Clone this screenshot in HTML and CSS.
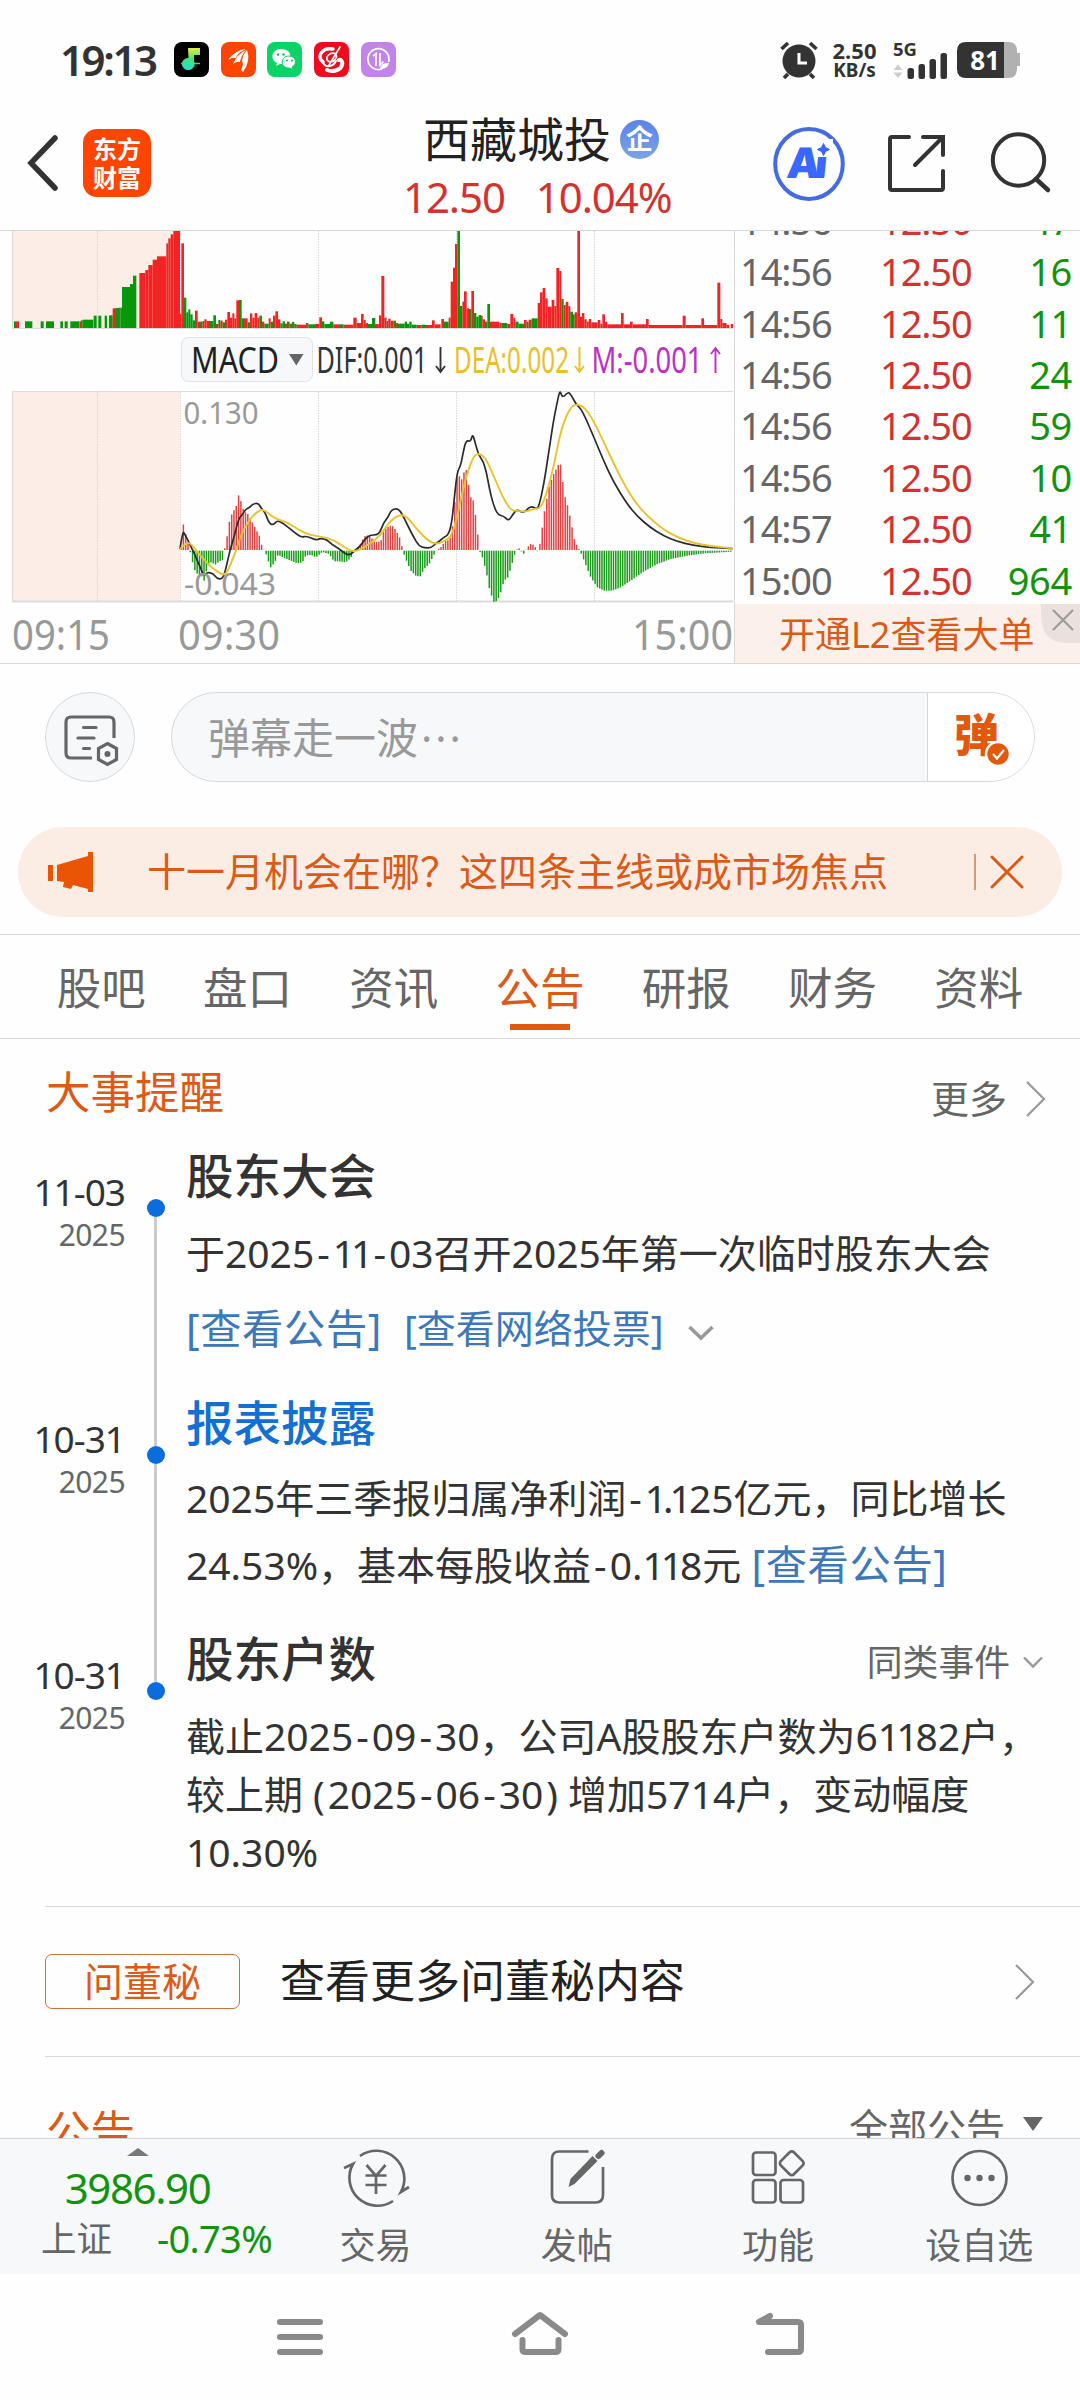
FILE: index.html
```html
<!DOCTYPE html>
<html lang="zh-CN">
<head>
<meta charset="utf-8">
<title>西藏城投 12.50 10.04%</title>
<link rel="stylesheet" href="styles.css">
</head>
<body>
<div class="phone">

  <div class="status">
    <span class="clock">19:13</span>
    <div class="apps">
      <svg class="app" viewBox="0 0 35 35"><defs><linearGradient id="note" x1="0" y1="0" x2="0" y2="1"><stop offset="0" stop-color="#e9e94a"/><stop offset=".5" stop-color="#49e07c"/><stop offset="1" stop-color="#1ce5d6"/></linearGradient></defs><rect width="35" height="35" rx="8" fill="#000"/><path d="M14 6h12v7h-6v6a6.500 6 0 1 1-5.500-3z" fill="url(#note)"/><path d="M7 21.500h6M20 21.500h6" stroke="#35dca0" stroke-width="1.500"/></svg>
      <svg class="app" viewBox="0 0 35 35"><rect width="35" height="35" rx="8" fill="#ff4500"/><path d="M7 18q7-10 18-11q-9 4-10 9q-4-1-8 2zM12 22q4-10 13-14q-5 6-6 12q-3-1-7 2zM20 28q3-6 1-9q1-7 5-11q4 11-4 22z" fill="#fff"/></svg>
      <svg class="app" viewBox="0 0 35 35"><rect width="35" height="35" rx="8" fill="#0bd368"/><path d="M14 7c-10 0-11 11-4 14l-1 3 4-2c12 1 15-15 1-15z" fill="#fff"/><path d="M22 14c-9 0-9 12 0 12l4 1.500-1-2.500c6-3 4-11-3-11z" fill="#fff" stroke="#0bd368"/><g fill="#0bb85b"><circle cx="11" cy="12.500" r="1.200"/><circle cx="16.500" cy="12.500" r="1.200"/><circle cx="20" cy="18.500" r="1"/><circle cx="25" cy="18.500" r="1"/></g></svg>
      <svg class="app" viewBox="0 0 35 35"><rect width="35" height="35" rx="8" fill="#f00a1e"/><g fill="none" stroke="#fff" stroke-linecap="round"><path d="M19 7C8 5 2 15 9 20" stroke-width="3.500"/><path d="M26 5L15 23M22 12c-6-3-12 4-8 7s10-3 8-6" stroke-width="1.700"/><path d="M13 28c5 2 13 1 15-5c1-3-1-6-3-5" stroke-width="4"/><path d="M9 21c3 5 10 4 13-2" stroke-width="2"/></g></svg>
      <svg class="app" viewBox="0 0 35 35"><rect width="35" height="35" rx="8" fill="#c384e8"/><g fill="none" stroke="#fff" stroke-width="1.700"><path d="M21 27A10.500 10.500 0 1 1 27.500 20"/><path d="M12 14l3-2.500v12.500M19 11v12l3.500-3.500"/></g><path d="M19 27q1-7 9-6q-1 6-9 6z" fill="#fff"/></svg>
    </div>
    <div class="sys">
      <svg class="alarm" viewBox="0 0 38 38"><circle cx="19" cy="20" r="16.500" fill="#333"/><path d="M1.500 8L8 2M36.500 8L30 2M8 33l-4 4M30 33l4 4" stroke="#333" stroke-width="3.600"/><path d="M19 12v10h8" fill="none" stroke="#fff" stroke-width="3"/></svg>
      <div class="net"><b>2.50</b><b class="unit">KB/s</b></div>
      <svg class="signal" viewBox="0 0 56 38"><text x="0" y="14.500" class="gen">5G</text><path d="M.500 29l4.500-5.500 4.500 5.500zM.500 31.500l4.500 5.500 4.500-5.500z" fill="#ccc"/><g fill="#333"><rect x="14.500" y="27" width="6.500" height="11" rx="2.500"/><rect x="25.500" y="23" width="6.500" height="15" rx="2.500"/><rect x="36.500" y="18" width="6.500" height="20" rx="2.500"/><rect x="47.500" y="12" width="6.500" height="26" rx="2.500"/></g></svg>
      <svg class="battery" viewBox="0 0 63 36"><path d="M47 0h5q7 0 8 8v3h3v13h-3v4q-1 8-8 8h-5z" fill="#b1b1b1"/><path d="M9 0h38v36H9q-9 0-9-9V9q0-9 9-9z" fill="#333"/><text x="28" y="28" text-anchor="middle" class="pct">81</text></svg>
    </div>
  </div>

  <header class="head">
    <svg class="back" viewBox="0 0 32 58"><path d="M28 4L4 29l24 25" fill="none" stroke="#333" stroke-width="5.500" stroke-linecap="round"/></svg>
    <div class="logo"><span>东方</span><span>财富</span></div>
    <div class="stock">
      <div class="name">西藏城投<span class="ent">企</span></div>
      <div class="quote"><span>12.50</span><span>10.04%</span></div>
    </div>
    <div class="tools">
      <svg class="ai" viewBox="0 0 72 74"><ellipse cx="36" cy="37" rx="33.800" ry="35" fill="none" stroke="#446be0" stroke-width="4"/><g transform="translate(5 0) skewX(-6)"><text x="13" y="51" class="aitext"><tspan>A</tspan><tspan x="41">i</tspan></text></g><rect x="42" y="12" width="18" height="18" fill="#fff"/><path d="M50.500 16.500l2 4 4 2-4 2-2 4-2-4-4-2 4-2z" fill="#3a67ff" stroke="#3a67ff"/></svg>
      <svg class="share" viewBox="0 0 60 60"><path d="M23 4H6q-2 0-2 2v49q0 2 2 2h49q2 0 2-2V38M37 4h20v18M57 4L29 32" fill="none" stroke="#333" stroke-width="4" stroke-linecap="round"/></svg>
      <svg class="search" viewBox="0 0 60 62"><circle cx="27.500" cy="28" r="25.700" fill="none" stroke="#333" stroke-width="4"/><path d="M45 47l12 11" stroke="#333" stroke-width="4.500" stroke-linecap="round"/></svg>
    </div>
  </header>

  <section class="market">
    <svg class="chart" id="chart" viewBox="0 231 734 432">
      <rect x="12" y="231" width="168" height="97" fill="#fcede6"/>
      <rect x="12" y="392" width="168" height="210" fill="#fcede6"/>
      <g fill="none" stroke="#dcdcdc"><path d="M12.500 231V328.500M12.500 602V391.500H733"/><path d="M12 328.500H733"/><path d="M12 601.500H733" stroke-width="1.800"/></g>
      <path d="M97.500 231V328M180.500 231V328M318.500 231V328M456.500 231V328M594.500 231V328M97.500 392V602M180.500 392V602M318.500 392V602M456.500 392V602M594.500 392V602" stroke="#d4d4d4" stroke-dasharray="1.300 1.300"/>
      <g id="volume"></g>
      <rect x="181.500" y="337.500" width="131" height="44" rx="7" fill="#f7f8fa" stroke="#dfe1e5"/>
      <g class="ind">
        <text x="191" y="373" textLength="88" lengthAdjust="spacingAndGlyphs" fill="#222">MACD</text>
        <path d="M289 354h14.500l-7.200 11.500z" fill="#666"/>
        <text x="316.500" y="373" textLength="111" lengthAdjust="spacingAndGlyphs" fill="#333">DIF:0.001</text>
        <text x="454" y="373" textLength="115" lengthAdjust="spacingAndGlyphs" fill="#e8c02c">DEA:0.002</text>
        <text x="591.500" y="373" textLength="111" lengthAdjust="spacingAndGlyphs" fill="#bd30c4">M:-0.001</text>
        <g fill="none" stroke-width="1.900"><path d="M440.500 347v25M436 366l4.500 6 4.500-6" stroke="#333"/><path d="M579.500 347v25M575 366l4.500 6 4.500-6" stroke="#e8c02c"/><path d="M715.500 373v-25M711 354l4.500-6 4.500 6" stroke="#bd30c4"/></g>
      </g>
      <g id="hist"></g>
      <path id="dif" fill="none" stroke="#2b2b2b" stroke-width="1.700" stroke-linejoin="round"/>
      <path id="dea" fill="none" stroke="#e8c32e" stroke-width="1.900" stroke-linejoin="round"/>
      <g class="scale"><text x="183.500" y="424" textLength="75" lengthAdjust="spacingAndGlyphs">0.130</text><text x="184" y="595" textLength="92" lengthAdjust="spacingAndGlyphs">-0.043</text></g>
      <g class="axis"><text x="12" y="649.500" textLength="98" lengthAdjust="spacingAndGlyphs">09:15</text><text x="178" y="649.500" textLength="102" lengthAdjust="spacingAndGlyphs">09:30</text><text x="632" y="649.500" textLength="101" lengthAdjust="spacingAndGlyphs">15:00</text></g>
    </svg>
    <div class="ticks">
      <div class="rows">
        <div class="tick"><span>14:56</span><span class="up">12.50</span><span class="dn">47</span></div>
        <div class="tick"><span>14:56</span><span class="up">12.50</span><span class="dn">16</span></div>
        <div class="tick"><span>14:56</span><span class="up">12.50</span><span class="dn">11</span></div>
        <div class="tick"><span>14:56</span><span class="up">12.50</span><span class="dn">24</span></div>
        <div class="tick"><span>14:56</span><span class="up">12.50</span><span class="dn">59</span></div>
        <div class="tick"><span>14:56</span><span class="up">12.50</span><span class="dn">10</span></div>
        <div class="tick"><span>14:57</span><span class="up">12.50</span><span class="dn">41</span></div>
        <div class="tick"><span>15:00</span><span class="up">12.50</span><span class="dn">964</span></div>
      </div>
      <div class="l2"><span>开通L2查看大单</span><svg class="l2x" viewBox="0 0 39 39"><path d="M0 0h39v39H24Q0 38 0 10z" fill="#ebe1dc"/><path d="M12 6l20 20M32 6L12 26" stroke="#999" stroke-width="2"/></svg></div>
    </div>
  </section>

  <div class="danmu">
    <div class="round"><svg viewBox="0 0 56 52" class="dmicon"><g fill="none" stroke="#666" stroke-width="3.200" stroke-linecap="round"><path d="M28 43H7q-5 0-5-5V7q0-5 5-5h38q5 0 5 5v16" stroke-linecap="butt"/><path d="M19.500 12.500h12.500M14 23h16M19.500 33.500h6"/><path d="M43.500 28.500l9 5v11l-9 5-9-5v-11z"/></g><circle cx="43.500" cy="39" r="3" fill="#666"/></svg></div>
    <div class="field"><span class="ph">弹幕走一波<i>···</i></span><div class="send"><span>弹</span><svg viewBox="0 0 26 26"><circle cx="13" cy="13" r="12" fill="#e3590c" stroke="#fff" stroke-width="2.500"/><path d="M8 13l4 4.500 7-8.500" fill="none" stroke="#fff" stroke-width="2.200"/></svg></div></div>
  </div>

  <div class="banner">
    <svg class="horn" viewBox="0 0 46 40"><path d="M0 13h5v16H0zM9 13L40 4V0h5v40h-5v-3l-15-4-2 4-8-2 1-5-7-1z" fill="#e95504"/></svg>
    <span>十一月机会在哪？这四条主线或成市场焦点</span>
    <svg class="bx" viewBox="0 0 50 36"><path d="M1 0v36" stroke="#d07a4a" stroke-width="1.500"/><path d="M18 3l30 30M48 3L18 33" stroke="#dc5a17" stroke-width="3" stroke-linecap="round"/></svg>
  </div>

  <nav class="tabs"><span>股吧</span><span>盘口</span><span>资讯</span><span class="on">公告</span><span>研报</span><span>财务</span><span>资料</span></nav>

  <div class="sechead"><h2>大事提醒</h2><span class="more">更多</span><svg class="chev" viewBox="0 0 20 36"><path d="M1 1l17 17L1 35" fill="none" stroke="#999" stroke-width="2.200"/></svg></div>

  <div class="event first">
    <div class="date"><b>11-03</b><span>2025</span></div>
    <div class="rail"><i class="lead none"></i><i class="dot"></i><i class="tail"></i></div>
    <div class="info"><h3>股东大会</h3><p>于2025<i class="h">-</i><i class="n">11</i><i class="h">-</i>03召开2025年第一次临时股东大会</p>
      <div class="links"><a class="big">[查看公告]</a><a>[查看网络投票]</a><svg class="down" viewBox="0 0 26 16"><path d="M1.500 2L13 13 24.500 2" fill="none" stroke="#999" stroke-width="3.600"/></svg></div></div>
  </div>
  <div class="event second">
    <div class="date"><b>10-31</b><span>2025</span></div>
    <div class="rail"><i class="lead"></i><i class="dot"></i><i class="tail"></i></div>
    <div class="info"><h3 class="blue">报表披露</h3><p>2025年三季报归属净利润<i class="h">-</i><i class="n">1.1</i>25亿元，同比增长<br>24.53%，基本每股收益<i class="h">-</i>0.<i class="n">11</i>8元 <a class="big">[查看公告]</a></p></div>
  </div>
  <div class="event third">
    <div class="date"><b>10-31</b><span>2025</span></div>
    <div class="rail"><i class="lead"></i><i class="dot"></i><i class="tail none"></i></div>
    <div class="info"><div class="trow"><h3>股东户数</h3><span class="same">同类事件</span><svg class="down2" viewBox="0 0 20 13"><path d="M1 1.500l9 9 9-9" fill="none" stroke="#999" stroke-width="2.400"/></svg></div><p>截止2025<i class="h">-</i>09<i class="h">-</i>30，公司A股股东户数为6<i class="n">11</i>82户，<br>较上期<span class="pl">(</span>2025<i class="h">-</i>06<i class="h">-</i>30<span class="pr">)</span>增加5714户，变动幅度<br>10.30%</p></div>
  </div>

  <div class="ask"><span class="tag">问董秘</span><span class="asktext">查看更多问董秘内容</span><svg class="chev2" viewBox="0 0 20 36"><path d="M1 1l17 17L1 35" fill="none" stroke="#999" stroke-width="2.200"/></svg></div>
  <div class="notice"><h2>公告</h2><span>全部公告</span><svg viewBox="0 0 20 14"><path d="M0 0h20L10 14z" fill="#666"/></svg></div>

  <footer class="bar">
    <div class="index">
      <svg class="caret" viewBox="0 0 22 8"><path d="M0 8L11 0l11 8z" fill="#77787a"/></svg>
      <span class="val">3986.90</span>
      <div class="chg"><span>上证</span><span class="g">-0.73%</span></div>
    </div>
    <div class="act"><svg viewBox="0 0 66 60"><g fill="none" stroke="#666" stroke-width="2.700"><path d="M17 8A28 28 0 0 1 58 44l8-5M50 53A28 28 0 0 1 10 16l-9 4"/><path d="M23.500 17L33 28l9.500-11M22.500 27.500h21M22.500 37h21M33 27v19"/></g></svg><span>交易</span></div>
    <div class="act"><svg viewBox="0 0 66 60"><g transform="translate(6.500 2)" fill="none" stroke="#666" stroke-width="2.700"><path d="M38 1.500H9Q1.500 1.500 1.500 9v36q0 7.500 7.500 7.500h36q7.500 0 7.500-7.500V17"/><path d="M18 37l2-8L42 6l5 5-23 23z" fill="#666" stroke="none"/><path d="M48 6l3-3" stroke-width="6" stroke-linecap="round"/></g></svg><span>发帖</span></div>
    <div class="act"><svg viewBox="0 0 66 60"><g transform="translate(6.500 2)" fill="none" stroke="#666" stroke-width="2.700"><rect x="1.500" y="2.500" width="22.500" height="22.500" rx="3"/><rect x="1.500" y="30" width="22.500" height="22.500" rx="3"/><rect x="29" y="30" width="22.500" height="22.500" rx="3"/><rect x="31" y="4" width="18.500" height="18.500" rx="3" transform="rotate(45 40.250 13.250)"/></g></svg><span>功能</span></div>
    <div class="act"><svg viewBox="0 0 66 60"><circle cx="33.500" cy="30" r="27" fill="none" stroke="#666" stroke-width="2.700"/><g fill="#666"><circle cx="21.500" cy="30" r="3.200"/><circle cx="33.500" cy="30" r="3.200"/><circle cx="45.500" cy="30" r="3.200"/></g></svg><span>设自选</span></div>
  </footer>

  <div class="keys">
    <svg viewBox="0 0 60 60"><path d="M10 15h40M10 30h40M10 45h40" stroke="#8a8a8a" stroke-width="6" stroke-linecap="round"/></svg>
    <svg viewBox="0 0 60 60"><path d="M5 27L30 8l25 19M12.500 33v9q0 3 3 3h30q3 0 3-3v-9" fill="none" stroke="#8a8a8a" stroke-width="6" stroke-linecap="round" stroke-linejoin="round"/></svg>
    <svg viewBox="0 0 60 60"><path d="M20 9L9 15h39q3 0 3 3v24q0 3-3 3H18" fill="none" stroke="#8a8a8a" stroke-width="6" stroke-linecap="round" stroke-linejoin="round"/></svg>
  </div>
</div>
<script src="chart.js"></script>
</body>
</html>
```

FILE: styles.css
```css
* { box-sizing: border-box; margin: 0; padding: 0; }
body { background: #fff; font-family: "Noto Sans", "Noto Sans CJK SC", sans-serif; color: #333; }
svg { display: block; flex: none; overflow: visible; }
span, b, h2, h3, a { white-space: nowrap; }
i { font-style: normal; }
.phone { width: 1080px; height: 2400px; overflow: hidden; background: #fefefe; display: flex; flex-direction: column; }
.phone > * { flex: none; }

.status { height: 100px; padding: 19px 60px 0; display: flex; align-items: center; }
.clock { font-size: 42px; font-weight: 600; line-height: 50px; letter-spacing: -2.400px; width: 114px; }
.apps { display: flex; gap: 11.700px; }
.app { width: 35px; height: 35px; }
.sys { margin-left: auto; display: flex; align-items: center; }
.alarm { width: 38px; height: 38px; }
.net { display: flex; flex-direction: column; width: 45px; margin-left: 14px; font-size: 22px; line-height: 20px; align-items: center; }
.net .unit { font-size: 19px; }
.signal { width: 56px; height: 38px; margin-left: 16px; }
.gen { font-size: 18.500px; font-weight: 700; fill: #333; }
.battery { width: 63px; height: 36px; margin-left: 8px; }
.pct { font-size: 26px; font-weight: 700; fill: #fff; }

.head { height: 131px; border-bottom: 1px solid #d6d8da; display: grid; grid-template-columns: 83px 68px 1fr 342px; align-items: start; }
.back { width: 32px; height: 58px; margin: 34px 0 0 27px; }
.logo { margin-top: 29px; height: 68px; border-radius: 14px; background: #ff4500; color: #fff; font-size: 24px; font-weight: 700; line-height: 29px; display: flex; flex-direction: column; align-items: center; justify-content: center; }
.stock { padding: 10px 0 0 252px; }
.name { font-size: 47px; line-height: 58px; color: #222; display: flex; align-items: center; margin-left: 20px; }
.ent { width: 39px; height: 39px; border-radius: 50%; background: linear-gradient(#5a83e8, #7ba5e4); color: #fff; font-size: 27px; line-height: 38px; font-weight: 700; text-align: center; margin-left: 9px; }
.quote { display: flex; gap: 31px; font-size: 42px; line-height: 58px; color: #d23330; letter-spacing: -1.100px; }
.tools { display: flex; padding-left: 35px; }
.ai { width: 72px; height: 74px; margin-top: 27px; }
.aitext { font: 900 42px Inter, sans-serif; fill: #3a67ff; }
.share { width: 60px; height: 60px; margin: 33px 0 0 41px; }
.search { width: 60px; height: 62px; margin: 32px 0 0 45px; }

.market { height: 433px; border-bottom: 1px solid #d6d8da; display: flex; }
.chart { width: 734px; height: 432px; overflow: hidden; }
.ind { font-size: 37px; }
.scale { font-size: 31px; fill: #999; }
.axis { font-size: 41px; fill: #999; }
.ticks { width: 346px; border-left: 1.500px solid #d6d8da; display: flex; flex-direction: column; }
.rows { flex: none; height: 373px; overflow: hidden; display: flex; flex-direction: column; justify-content: flex-end; padding: 0 8px 0 5px; }
.tick { flex: none; height: 51.400px; line-height: 54px; font-size: 38px; letter-spacing: -1.100px; color: #666; display: grid; grid-template-columns: 140px 1fr 90px; }
.up { color: #d23330; }
.dn { color: #12930f; text-align: right; letter-spacing: -.3px; }
.l2 { flex: none; height: 59px; background: #fcf0ea; color: #dc5a17; display: flex; font-size: 36px; line-height: 62px; padding-left: 44px; }
.l2x { width: 39px; height: 39px; margin-left: auto; }

.danmu { height: 145px; padding: 28px 45px 0; display: flex; justify-content: space-between; }
.round { width: 90px; height: 90px; border: 1.500px solid #d5d8dc; border-radius: 50%; background: #f7f8fa; }
.dmicon { width: 56px; height: 52px; margin: 22px 0 0 18px; }
.field { width: 864px; height: 90px; border: 1.500px solid #d5d8dc; border-radius: 45px; background: #f7f8fa; display: flex; overflow: hidden; }
.ph { font-size: 42px; line-height: 89px; color: #999; padding-left: 36px; }
.ph i { letter-spacing: 3px; margin-left: 3px; }
.send { margin-left: auto; width: 107px; border-left: 1.500px solid #d5d8dc; background: #fff; display: flex; align-items: flex-start; }
.send span { font-size: 45px; font-weight: 900; line-height: 84px; color: #e3590c; margin-left: 26px; width: 45px; }
.send svg { width: 26px; height: 26px; margin: 48px 0 0 -14px; }

.banner { margin: 18px 18px 17px; height: 90px; border-radius: 45px; background: #fcede4; display: flex; align-items: center; padding: 0 38px 0 30px; }
.horn { width: 46px; height: 40px; }
.banner span { font-size: 39px; color: #dc5a17; margin-left: 53px; line-height: 84px; height: 86px; }
.bx { width: 50px; height: 36px; margin-left: auto; }

.tabs { height: 105px; border-top: 1px solid #d6d8da; border-bottom: 1px solid #d6d8da; padding: 0 28px; display: grid; grid-template-columns: repeat(7, 1fr); }
.tabs span { text-align: center; font-size: 44.500px; line-height: 106px; color: #666; height: 95px; }
.tabs .on { color: #dc5a17; background: linear-gradient(#e3590c, #e3590c) center bottom / 60px 6px no-repeat; }

.sechead { height: 108px; padding: 0 34px 0 46px; display: flex; align-items: flex-start; }
h2 { font-size: 44.500px; line-height: 106px; font-weight: 400; color: #dc5a17; }
.more { margin-left: auto; font-size: 38px; line-height: 119px; color: #666; }
.chev { width: 20px; height: 36px; margin: 42px 0 0 19px; }

.event { display: grid; grid-template-columns: 125px 61px 1fr; }
.first { height: 247px; }
.second { height: 236px; }
.third { height: 276px; }
.date { padding-top: 22px; text-align: right; display: flex; flex-direction: column; }
.date b { font-weight: 400; font-size: 37px; line-height: 45px; letter-spacing: -1px; }
.date span { font-size: 30px; line-height: 42px; color: #666; letter-spacing: -.6px; }
.rail { display: flex; flex-direction: column; align-items: center; }
.lead { height: 52px; width: 3px; background: #ccc; }
.dot { height: 18px; width: 18px; border-radius: 50%; background: #0b6cdd; }
.tail { flex: 1; width: 3px; background: #ccc; }
.none { background: none; }
h3 { font-size: 47.500px; line-height: 58px; font-weight: 500; }
.blue { color: #146fd3; }
p { font-size: 39px; line-height: 58px; margin-top: 19px; white-space: nowrap; }
.second p { line-height: 66px; margin-top: 13px; }
.h { margin: 0 3px; }
.n { letter-spacing: -4px; margin-right: 1px; }
a { color: #3f78b9; font-size: 39px; }
.big { font-size: 41.300px; letter-spacing: .6px; }
.links { display: flex; margin-top: 17px; line-height: 58px; }
.links a + a { margin-left: 22px; }
.down { width: 26px; height: 16px; margin: 26px 0 0 24px; }
.trow { display: flex; height: 58px; padding-right: 37px; }
.same { font-size: 35.800px; line-height: 65px; color: #666; margin-left: auto; }
.down2 { width: 20px; height: 13px; margin: 26px 0 0 13px; }
.pl { margin: 0 3px 0 10px; }
.pr { margin: 0 10px 0 3px; }

.ask { margin-left: 45px; height: 151px; border-top: 1px solid #d6d8da; border-bottom: 1px solid #d6d8da; display: flex; align-items: center; padding-right: 45px; }
.tag { width: 195px; height: 55px; border: 1.500px solid #c8713c; border-radius: 7px; text-align: center; color: #dc5a17; font-size: 39px; line-height: 51px; }
.asktext { font-size: 45px; line-height: 62px; height: 64px; color: #222; margin-left: 40px; }
.chev2 { width: 20px; height: 36px; margin-left: auto; }
.notice { height: 81px; overflow: hidden; padding: 0 37px 0 46px; display: flex; }
.notice h2 { line-height: 148px; }
.notice span { margin-left: auto; font-size: 39px; line-height: 140px; color: #666; }
.notice svg { width: 20px; height: 14px; margin: 60px 0 0 18px; }

.bar { height: 136px; border-top: 1px solid #d0d3d8; background: #f7f8fa; display: grid; grid-template-columns: 275px repeat(4, 1fr); }
.index { display: flex; flex-direction: column; align-items: center; padding-top: 9px; color: #12930f; }
.caret { width: 22px; height: 8px; }
.val { font-size: 42px; line-height: 64px; letter-spacing: -1.400px; }
.chg { display: flex; align-items: center; gap: 45px; font-size: 35.500px; line-height: 36px; color: #666; padding-left: 41px; align-self: flex-start; }
.chg .g { color: #12930f; font-size: 38px; letter-spacing: -.7px; }
.act { display: flex; flex-direction: column; align-items: center; padding-top: 9px; font-size: 36px; line-height: 75px; color: #666; }
.act svg { width: 66px; height: 60px; }
.keys { height: 126px; display: flex; justify-content: center; gap: 180px; padding-top: 33px; }
.keys svg { width: 60px; height: 60px; }
```

FILE: chart.js
```js
// Coordinates below are in thirds of a pixel, measured from y = 225.
const NS = 'http://www.w3.org/2000/svg';
const px = v => (v / 3).toFixed(2);
const py = v => (225 + v / 3).toFixed(2);

function bar(group, x, y, w, h, fill) {
  const r = document.createElementNS(NS, 'rect');
  r.setAttribute('x', x); r.setAttribute('y', y);
  r.setAttribute('width', w); r.setAttribute('height', h);
  r.setAttribute('fill', fill);
  group.appendChild(r);
}

// start, end, top, colour
const open = 'g42,48,289 r48,57,289 g75,97,289 g122,131,289 g138,162,289 g181,189,289 g194,203,289 g211,237,289 r238,243,289 g243,248,286 g248,280,284 g281,290,272 g295,304,272 g314,321,272 g327,338,271 r338,348,250 g348,357,249 r357,361,248 g361,366,248 g366,390,186 g390,399,177 g399,409,152 r418,436,144 r436,445,135 r445,458,120 r458,471,104 r471,499,94 r499,505,55 r505,512,40 r512,520,28 r520,540,18 r540,544,266 r544,552,55 g552,559,218 g559,565,262 g565,571,253 g571,578,268 g578,585,286 r585,593,257 r593,600,290 g600,607,290 r607,613,288 r613,620,283 r620,627,288 g627,640,288 g640,648,271 r648,655,297 g655,661,285 r661,668,287 g668,675,292 r675,682,284 r682,690,261 r690,697,278 r697,703,265 r703,709,280 r709,717,226 g717,725,225 g725,732,280 r732,743,280 g743,750,292 r750,757,265 r757,764,278 r764,772,264 r772,778,278 g778,786,272 r786,793,290 g793,806,296 r806,812,280 g812,819,290 r819,826,272 r826,834,259 r834,841,283 g841,848,295 g848,855,289 r855,861,296 g861,869,290 r869,876,296 g876,883,291 g883,890,297 r890,918,299 r918,925,294 g925,945,298 r945,958,297 r958,966,277 g966,973,289 g973,990,297 g990,1000,290 r1000,1020,298 g1020,1030,298 r1030,1060,299 r1060,1070,278 r1070,1083,294 r1083,1091,267 r1091,1097,285 r1097,1104,294 g1104,1116,297 g1116,1126,279 r1126,1136,297';
const later = 'r-14,-6,297 g-6,5,297 g6,14,280 r14,27,299 r27,34,271 r34,43,153 r43,50,278 g50,55,288 r55,62,281 r62,70,287 g70,78,287 r78,84,294 g84,104,296 g104,111,290 g111,118,296 g118,125,290 g125,140,299 r140,155,300 g155,165,299 r165,186,300 r186,194,286 r194,212,298 r214,222,282 g222,236,290 r236,242,278 r242,249,170 r249,255,128 r255,262,57 g262,270,18 g270,277,243 r277,282,230 r282,290,199 r290,297,250 g297,304,252 r304,312,198 g312,319,264 g319,326,275 g326,333,270 r333,338,272 r338,345,283 g345,352,290 g352,360,237 r360,388,290 r388,395,293 g395,412,294 r412,421,297 r421,430,267 r430,436,278 g436,446,290 g446,462,296 r462,470,285 g470,476,290 r476,485,284 g485,503,280 r503,510,234 r510,518,202 r518,526,189 r526,533,220 r533,545,245 r545,553,225 r553,559,243 r559,568,129 r568,574,138 g574,581,222 r581,587,240 r587,595,231 r595,601,243 g601,609,260 g609,614,268 r614,622,262 r622,630,18 r630,636,275 r636,643,264 r643,650,283 r650,656,290 r656,664,282 r664,683,292 r683,691,285 r691,697,296 r697,705,268 r705,712,290 r712,753,298 r753,761,264 r761,780,298 r780,788,290 r788,828,298 r828,836,282 r836,938,300 r938,947,272 r947,994,300 r994,1002,280 r1002,1042,300 r1042,1051,173 r1051,1057,282 r1057,1070,294 r1070,1078,300 r1082,1089,297';
const vol = document.getElementById('volume');
const drawVolume = (list, shift) => list.split(' ').forEach(s => {
  const [a, b, t] = s.slice(1).split(',').map(Number);
  bar(vol, px(a + shift), py(t), px(b - a), px(309 - t), s[0] === 'r' ? '#f02424' : '#07980a');
});
drawVolume(open, 0);
drawVolume(later, 1110);

const parse = (s, shift) => s.split(' ').map(p => { const [x, y] = p.split(',').map(Number); return [x + shift, y]; });
const hist = [
  ...parse('541,10 546,84 552,60 560,25 566,5 570,-10 580,-55 590,-70 602,-75 610,-90 620,-50 630,-35 645,-42 655,-32 667,-28 671,0 678,35 686,85 692,105 700,120 707,133 713,165 720,148 730,115 740,110 752,88 764,65 776,42 784,10 790,0 797,-12 804,-35 810,-50 822,-35 832,-12 850,-22 870,-30 890,-38 905,-35 915,-15 930,-12 945,-20 955,-12 965,-4 985,-10 1000,-32 1015,-32 1035,-35 1050,-22 1058,-5 1064,0 1075,10 1085,30 1095,45 1110,40 1120,25', 0),
  ...parse('15,25 30,25 40,60 50,68 63,75 75,60 88,35 96,0 105,-25 120,-60 135,-75 148,-78 160,-55 175,-40 190,-12 197,0 210,8 225,28 237,30 247,80 255,180 262,242 270,200 277,230 287,240 295,185 303,145 309,150 316,90 323,30 326,0 335,-20 347,-65 357,-120 370,-155 380,-150 390,-125 400,-90 412,-80 425,-35 435,0 445,5 460,-10 470,8 480,18 490,15 500,-3 508,20 520,110 535,190 545,220 555,240 565,260 571,255 580,170 590,135 600,90 610,35 622,5 628,0 640,-30 660,-80 680,-110 700,-120 725,-120 750,-110 780,-90 820,-62 860,-40 900,-25 950,-15 1000,-8 1088,-3', 1110)
];
const hg = document.getElementById('hist');
let k = 0;
for (let x = 541; x < 2197; x += 6.9) {
  while (k < hist.length - 2 && hist[k + 1][0] < x) k++;
  const [x0, y0] = hist[k], [x1, y1] = hist[k + 1];
  const v = y0 + (y1 - y0) * (x - x0) / (x1 - x0);
  bar(hg, px(x), py(v > 0 ? 975 - v : 977), 1.5, px(Math.abs(v)), v > 0 ? '#dc4444' : '#1a9a1a');
}

// smooth curve through the points, midpoint to midpoint
function line(id, pts) {
  let d = `M${px(pts[0][0])} ${py(pts[0][1])}`;
  for (let i = 1; i < pts.length - 1; i++) {
    const [x, y] = pts[i], [nx, ny] = pts[i + 1];
    d += `Q${px(x)} ${py(y)} ${px((x + nx) / 2)} ${py((y + ny) / 2)}`;
  }
  const e = pts[pts.length - 1];
  document.getElementById(id).setAttribute('d', d + `L${px(e[0])} ${py(e[1])}`);
}
line('dif', [
  ...parse('540,972 548,918 555,928 568,955 585,990 600,1025 612,1054 622,1041 640,1046 650,1060 668,1063 678,1030 690,975 704,930 716,880 728,868 738,852 748,848 758,837 775,834 785,852 795,862 808,897 822,899 830,887 845,892 865,907 885,924 905,937 920,933 950,946 960,940 980,943 995,958 1015,970 1040,989 1052,989 1065,975 1080,965 1095,942 1110,930', 0),
  ...parse('20,930 30,922 40,895 52,880 65,853 85,851 97,868 110,895 130,935 147,963 165,969 185,968 197,955 210,948 220,937 235,930 245,895 252,830 258,770 264,735 272,722 280,680 288,646 302,650 308,626 316,655 326,690 340,710 350,745 358,790 370,840 384,870 402,873 416,889 430,865 442,853 460,864 475,850 486,844 500,853 508,840 522,775 535,690 550,590 562,530 570,494 577,520 595,500 605,512 618,538 632,550 648,582 670,633 700,705 730,770 770,835 800,872 840,907 880,932 920,949 970,961 1020,967 1088,971', 1110)
]);
line('dea', [
  ...parse('540,972 555,957 568,953 580,965 600,990 625,1018 645,1035 672,1052 685,1035 705,985 725,925 745,890 765,865 785,853 800,860 825,882 860,890 900,917 930,930 990,940 1020,957 1045,975 1070,980 1100,962', 0),
  ...parse('15,945 35,925 65,883 95,867 115,880 145,918 175,948 200,958 225,948 245,932 262,875 275,810 290,750 308,700 322,684 345,695 370,750 395,810 420,854 440,858 470,860 490,852 510,850 525,820 545,750 560,680 572,620 590,570 605,544 622,537 645,548 675,595 710,670 750,755 790,825 830,872 880,913 920,936 970,954 1020,963 1088,970', 1110)
]);
```
